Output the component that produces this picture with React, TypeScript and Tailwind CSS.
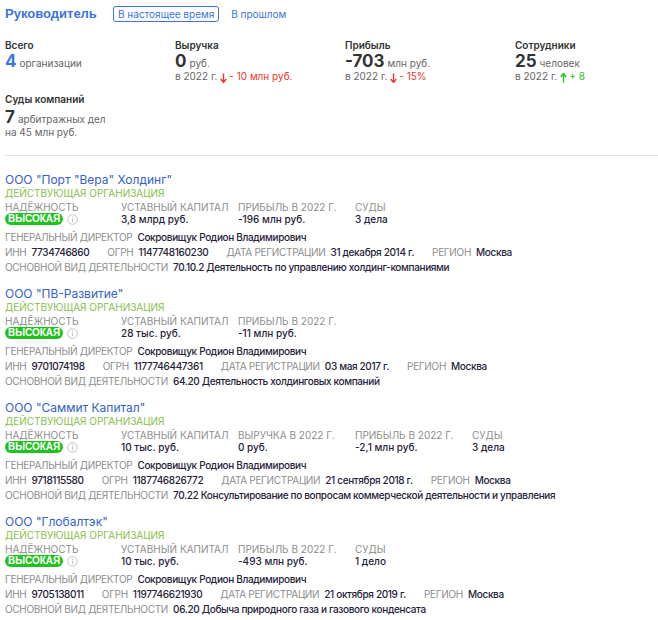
import React from "react";

const body = { fontFamily: "Inter, 'Noto Sans', Roboto, sans-serif" };
const arial = { fontFamily: "'Liberation Sans', Arial, sans-serif" };

function ArrowDown() {
  return (
    <svg width="7" height="10" viewBox="0 0 7 10" className="inline-block mr-[2px] -mb-[1px]">
      <path d="M3.5 0.5 V8.5" stroke="#f0332a" strokeWidth="1.4" />
      <path d="M0.8 6 L3.5 9.5 L6.2 6" fill="none" stroke="#f0332a" strokeWidth="1.4" />
    </svg>
  );
}
function ArrowUp() {
  return (
    <svg width="7" height="10" viewBox="0 0 7 10" className="inline-block mr-[2px] -mb-[1px]">
      <path d="M3.5 1.5 V9.5" stroke="#27c027" strokeWidth="1.4" />
      <path d="M0.8 4 L3.5 0.5 L6.2 4" fill="none" stroke="#27c027" strokeWidth="1.4" />
    </svg>
  );
}

function Info() {
  return (
    <svg width="11" height="11" viewBox="0 0 11 11" className="ml-[4px]">
      <circle cx="5.5" cy="5.5" r="4.8" fill="none" stroke="#c4c4c4" strokeWidth="1" />
      <circle cx="5.5" cy="3.3" r="0.7" fill="#c4c4c4" />
      <path d="M5.5 4.7 V8.2" stroke="#c4c4c4" strokeWidth="1.1" />
    </svg>
  );
}

type Stat = { label: string; value: string };
type Company = {
  name: string;
  stats: Stat[];
  inn: string;
  ogrn: string;
  date: string;
  okved: string;
};

const companies: Company[] = [
  {
    name: 'ООО "Порт "Вера" Холдинг"',
    stats: [
      { label: "УСТАВНЫЙ КАПИТАЛ", value: "3,8 млрд руб." },
      { label: "ПРИБЫЛЬ В 2022 Г.", value: "-196 млн руб." },
      { label: "СУДЫ", value: "3 дела" },
    ],
    inn: "7734746860",
    ogrn: "1147748160230",
    date: "31 декабря 2014 г.",
    okved: "70.10.2 Деятельность по управлению холдинг-компаниями",
  },
  {
    name: 'ООО "ПВ-Развитие"',
    stats: [
      { label: "УСТАВНЫЙ КАПИТАЛ", value: "28 тыс. руб." },
      { label: "ПРИБЫЛЬ В 2022 Г.", value: "-11 млн руб." },
    ],
    inn: "9701074198",
    ogrn: "1177746447361",
    date: "03 мая 2017 г.",
    okved: "64.20 Деятельность холдинговых компаний",
  },
  {
    name: 'ООО "Саммит Капитал"',
    stats: [
      { label: "УСТАВНЫЙ КАПИТАЛ", value: "10 тыс. руб." },
      { label: "ВЫРУЧКА В 2022 Г.", value: "0 руб." },
      { label: "ПРИБЫЛЬ В 2022 Г.", value: "-2,1 млн руб." },
      { label: "СУДЫ", value: "3 дела" },
    ],
    inn: "9718115580",
    ogrn: "1187746826772",
    date: "21 сентября 2018 г.",
    okved: "70.22 Консультирование по вопросам коммерческой деятельности и управления",
  },
  {
    name: 'ООО "Глобалтэк"',
    stats: [
      { label: "УСТАВНЫЙ КАПИТАЛ", value: "10 тыс. руб." },
      { label: "ПРИБЫЛЬ В 2022 Г.", value: "-493 млн руб." },
      { label: "СУДЫ", value: "1 дело" },
    ],
    inn: "9705138011",
    ogrn: "1197746621930",
    date: "21 октября 2019 г.",
    okved: "06.20 Добыча природного газа и газового конденсата",
  },
];

function Pair({ label, value }: { label: string; value: string }) {
  return (
    <span className="flex items-baseline gap-[5px]">
      <span className="text-[#8d8d8d] tracking-[-0.3px]">{label}</span>
      <span className="text-[#1f2238] font-medium tracking-[-0.35px]">{value}</span>
    </span>
  );
}

function CompanyCard({ c }: { c: Company }) {
  return (
    <div className="flex flex-col">
      <div className="text-[12px] leading-[14px] text-[#3461c9]">{c.name}</div>
      <div className="text-[10px] leading-[12px] text-[#84c14a]">ДЕЙСТВУЮЩАЯ ОРГАНИЗАЦИЯ</div>
      <div className="flex mt-[3px] text-[10px]">
        <div className="w-[116px] flex flex-col">
          <div className="leading-[11px] text-[#8d8d8d]">НАДЁЖНОСТЬ</div>
          <div className="flex items-center h-[12px]">
            <span
              className="bg-[#1fc21f] text-white font-bold text-[10px] leading-[12px] h-[12px] rounded-full px-[3px]"
              style={arial}
            >
              ВЫСОКАЯ
            </span>
            <Info />
          </div>
        </div>
        {c.stats.map((s) => (
          <div key={s.label} className="w-[117px] flex flex-col">
            <div className="leading-[11px] text-[#8d8d8d]">{s.label}</div>
            <div className="leading-[12px] text-[#1f2238] font-medium">{s.value}</div>
          </div>
        ))}
      </div>
      <div className="mt-[5px] flex flex-col text-[10px] leading-[15px]">
        <Pair label="ГЕНЕРАЛЬНЫЙ ДИРЕКТОР" value="Сокровищук Родион Владимирович" />
        <div className="flex gap-[18px]">
          <Pair label="ИНН" value={c.inn} />
          <Pair label="ОГРН" value={c.ogrn} />
          <Pair label="ДАТА РЕГИСТРАЦИИ" value={c.date} />
          <Pair label="РЕГИОН" value="Москва" />
        </div>
        <Pair label="ОСНОВНОЙ ВИД ДЕЯТЕЛЬНОСТИ" value={c.okved} />
      </div>
    </div>
  );
}

export default function App() {
  return (
    <div className="w-[658px] h-[620px] bg-white pl-[5px] overflow-hidden" style={body}>
      <div className="flex items-center h-[28px]">
        <div className="text-[13px] font-bold text-[#3b74e0] w-[108px]" style={arial}>
          Руководитель
        </div>
        <div className="border border-[#3b74e0] rounded-[3px] h-[16px] px-[4px] flex items-center text-[10px] text-[#3b74e0]">
          В настоящее время
        </div>
        <div className="ml-[12px] text-[10px] text-[#3b74e0]">В прошлом</div>
      </div>

      <div className="mt-[10px] grid grid-cols-[170px_170px_170px_150px]">
        <div>
          <div className="text-[10px] leading-[14px] font-semibold text-[#333]">Всего</div>
          <div className="h-[18px] leading-[18px] flex items-baseline gap-[3px]">
            <span className="text-[17px] font-bold text-[#3b74e0]">4</span>
            <span className="text-[10px] text-[#666]">организации</span>
          </div>
        </div>
        <div>
          <div className="text-[10px] leading-[14px] font-semibold text-[#333]">Выручка</div>
          <div className="h-[18px] leading-[18px] flex items-baseline gap-[3px]">
            <span className="text-[17px] font-bold text-[#333]">0</span>
            <span className="text-[10px] text-[#666]">руб.</span>
          </div>
          <div className="text-[10px] leading-[12px] text-[#666]">
            в 2022 г. <ArrowDown />
            <span className="text-[#f0332a]">- 10 млн руб.</span>
          </div>
        </div>
        <div>
          <div className="text-[10px] leading-[14px] font-semibold text-[#333]">Прибыль</div>
          <div className="h-[18px] leading-[18px] flex items-baseline gap-[3px]">
            <span className="text-[17px] font-bold text-[#333]">-703</span>
            <span className="text-[10px] text-[#666]">млн руб.</span>
          </div>
          <div className="text-[10px] leading-[12px] text-[#666]">
            в 2022 г. <ArrowDown />
            <span className="text-[#f0332a]">- 15%</span>
          </div>
        </div>
        <div>
          <div className="text-[10px] leading-[14px] font-semibold text-[#333]">Сотрудники</div>
          <div className="h-[18px] leading-[18px] flex items-baseline gap-[3px]">
            <span className="text-[17px] font-bold text-[#333]">25</span>
            <span className="text-[10px] text-[#666]">человек</span>
          </div>
          <div className="text-[10px] leading-[12px] text-[#666]">
            в 2022 г. <ArrowUp />
            <span className="text-[#27c027]">+ 8</span>
          </div>
        </div>
      </div>

      <div className="mt-[10px]">
        <div className="text-[10px] leading-[14px] font-semibold text-[#333]">Суды компаний</div>
        <div className="mt-[2px] h-[18px] leading-[18px] flex items-baseline gap-[3px]">
          <span className="text-[17px] font-bold text-[#333]">7</span>
          <span className="text-[10px] text-[#666]">арбитражных дел</span>
        </div>
        <div className="text-[10px] leading-[12px] text-[#666]">на 45 млн руб.</div>
      </div>

      <div className="mt-[17px] h-px bg-[#e6e6e6]" />

      <div className="mt-[17px] flex flex-col gap-[12px]">
        {companies.map((c) => (
          <CompanyCard key={c.name} c={c} />
        ))}
      </div>
    </div>
  );
}
